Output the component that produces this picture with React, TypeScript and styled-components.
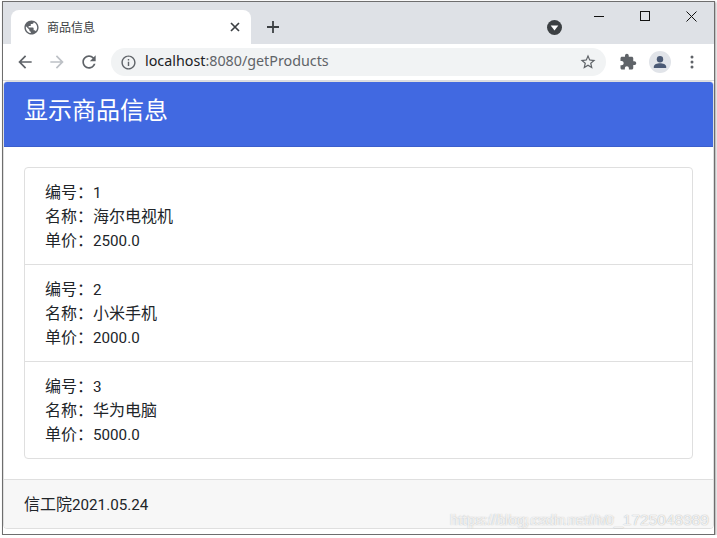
import styled, { createGlobalStyle } from "styled-components"

const GlobalStyle = createGlobalStyle`
html, body {
  margin: 0;
  padding: 0;
  background: #fff;
}
body {
  font-family: "Noto Sans CJK SC", sans-serif;
  color: #212529;
}
`
const BrowserWindow = styled.div`
box-sizing: border-box;
width: 713px;
height: 534px;
margin: 1px 0 0 2px;
border: 1px solid #6e6e6e;
box-shadow: 1px 1px 2px rgba(0, 0, 0, .35);
background: #fff;
display: flex;
flex-direction: column;
overflow: hidden;
position: relative;
`
const TabStrip = styled.div`
height: 42px;
background: #dee1e6;
display: flex;
padding-left: 8px;
flex-shrink: 0;
`
const Tab = styled.div`
width: 240px;
height: 34px;
margin-top: 8px;
background: #fff;
border-radius: 8px 8px 0 0;
display: flex;
align-items: center;
box-sizing: border-box;
padding: 0 11px 0 12px;
`
const TabTitle = styled.span`
font-size: 12px;
line-height: 16px;
margin: 0 0 1px 7px;
color: #3c4043;
flex: 1;
`
const NewTab = styled.div`
width: 28px;
height: 34px;
margin: 8px 0 0 8px;
display: flex;
align-items: center;
justify-content: center;
`
const MediaButton = styled.div`
width: 24px;
height: 34px;
margin: 8px 9px 0 auto;
padding-right: 1px;
box-sizing: border-box;
display: flex;
align-items: center;
justify-content: center;
`
const WindowButton = styled.div`
width: 46px;
height: 28px;
display: flex;
align-items: center;
justify-content: center;
`
const Toolbar = styled.div`
height: 36px;
background: #fff;
border-bottom: 1px solid #dadce0;
display: flex;
align-items: center;
padding-left: 6px;
flex-shrink: 0;
`
const NavButton = styled.div`
width: 32px;
height: 28px;
display: flex;
align-items: center;
justify-content: center;
`
const Omnibox = styled.div`
width: 495px;
height: 28px;
margin: 0 6px 0 6px;
border-radius: 14px;
background: #f1f3f4;
display: flex;
align-items: center;
box-sizing: border-box;
padding: 0 9px 0 9px;
`
const UrlText = styled.div`
font-family: "Noto Sans", sans-serif;
font-size: 14.3px;
line-height: 18px;
margin: 0 0 2px 8px;
flex: 1;
color: #5f6368;
white-space: nowrap;
`
const UrlHost = styled.span`
color: #202124;
`
const ToolButton = styled.div`
width: 32px;
height: 28px;
display: flex;
align-items: center;
justify-content: center;
`
const Card = styled.div`
flex: 1;
box-sizing: border-box;
margin-bottom: 5px;
border: 1px solid #dfdfdf;
border-radius: 4px;
display: flex;
flex-direction: column;
overflow: hidden;
`
const CardHeader = styled.div`
height: 65px;
flex-shrink: 0;
box-sizing: border-box;
background: #4169e1;
border-bottom: 1px solid #3b5fcc;
color: #fff;
font-size: 24px;
line-height: 54px;
padding-left: 20px;
`
const CardBody = styled.div`
flex: 1;
padding: 20px;
`
const ListGroup = styled.div`
border: 1px solid #dfdfdf;
border-radius: 4px;
`
const ListItem = styled.div`
padding: 12px 20px;
font-size: 16px;
color: #212529;
& + & {
  border-top: 1px solid #dfdfdf;
}
`
const Line = styled.div`
height: 24px;
line-height: 22px;
`
const Num = styled.span`
font-family: "Roboto", sans-serif;
font-size: 15.2px;
`
const CardFooter = styled.div`
height: 49px;
flex-shrink: 0;
box-sizing: border-box;
background: #f7f7f7;
border-top: 1px solid #dfdfdf;
font-size: 16px;
line-height: 46px;
padding-left: 20px;
color: #212529;
`
const Watermark = styled.div`
position: absolute;
right: 5px;
bottom: 5px;
width: 258px;
height: 18px;
font-family: "Liberation Sans", sans-serif;
font-size: 15.5px;
line-height: 18px;
color: rgba(255, 255, 255, .75);
text-shadow: 0 0 1px rgba(120, 120, 120, .42);
white-space: nowrap;
`
const WatermarkLine = styled.span`
position: absolute;
right: 0;
top: 0;
`

const products = [
  { id: "1", name: "海尔电视机", price: "2500.0" },
  { id: "2", name: "小米手机", price: "2000.0" },
  { id: "3", name: "华为电脑", price: "5000.0" },
]

const Icon = ({ d, size, color }: { d: string; size: number; color: string }) => (
  <svg width={size} height={size} viewBox="0 0 24 24" fill={color}>
    <path d={d} />
  </svg>
)

const App = () => {
  return (
    <>
      <GlobalStyle />
      <BrowserWindow>
        <TabStrip>
          <Tab>
            <Icon size={17} color="#5f6368" d="M12 2C6.48 2 2 6.48 2 12s4.48 10 10 10 10-4.48 10-10S17.52 2 12 2zm-1 17.93c-3.95-.49-7-3.85-7-7.93 0-.62.08-1.21.21-1.79L9 15v1c0 1.1.9 2 2 2v1.93zm6.9-2.54c-.26-.81-1-1.39-1.9-1.39h-1v-3c0-.55-.45-1-1-1H8v-2h2c.55 0 1-.45 1-1V7h2c1.1 0 2-.9 2-2v-.41c2.93 1.19 5 4.06 5 7.41 0 2.08-.8 3.97-2.1 5.39z" />
            <TabTitle>商品信息</TabTitle>
            <svg width="10" height="10" viewBox="0 0 10 10" stroke="#3c4043" strokeWidth="1.7">
              <path d="M1 1l8 8M9 1l-8 8" />
            </svg>
          </Tab>
          <NewTab>
            <svg width="12" height="12" viewBox="0 0 12 12" stroke="#3c4043" strokeWidth="1.8">
              <path d="M6 0v12M0 6h12" />
            </svg>
          </NewTab>
          <MediaButton>
            <svg width="15" height="15" viewBox="0 0 15 15">
              <circle cx="7.5" cy="7.5" r="7.5" fill="#3c4043" />
              <path d="M3.7 5.6h7.6L7.5 10.4z" fill="#fff" />
            </svg>
          </MediaButton>
          <WindowButton>
            <svg width="10" height="10" viewBox="0 0 10 10" stroke="#111" strokeWidth="1">
              <path d="M0 5.5h10" />
            </svg>
          </WindowButton>
          <WindowButton>
            <svg width="10" height="10" viewBox="0 0 10 10" stroke="#111" strokeWidth="1" fill="none">
              <rect x=".5" y=".5" width="9" height="9" />
            </svg>
          </WindowButton>
          <WindowButton>
            <svg width="11" height="11" viewBox="0 0 11 11" stroke="#111" strokeWidth="1">
              <path d="M.5.5l10 10M10.5.5l-10 10" />
            </svg>
          </WindowButton>
        </TabStrip>
        <Toolbar>
          <NavButton>
            <Icon size={20} color="#5f6368" d="M20 11H7.83l5.59-5.59L12 4l-8 8 8 8 1.41-1.41L7.83 13H20v-2z" />
          </NavButton>
          <NavButton>
            <Icon size={20} color="#bdc1c6" d="M12 4l-1.41 1.41L16.17 11H4v2h12.17l-5.58 5.59L12 20l8-8z" />
          </NavButton>
          <NavButton>
            <Icon size={20} color="#5f6368" d="M17.65 6.35C16.2 4.9 14.21 4 12 4c-4.42 0-7.99 3.58-7.99 8s3.57 8 7.99 8c3.73 0 6.84-2.55 7.73-6h-2.08c-.82 2.33-3.04 4-5.65 4-3.31 0-6-2.69-6-6s2.69-6 6-6c1.66 0 3.14.69 4.22 1.78L13 11h7V4l-2.35 2.35z" />
          </NavButton>
          <Omnibox>
            <Icon size={17} color="#5f6368" d="M11 7h2v2h-2zm0 4h2v6h-2zm1-9C6.48 2 2 6.48 2 12s4.48 10 10 10 10-4.48 10-10S17.52 2 12 2zm0 18c-4.41 0-8-3.59-8-8s3.59-8 8-8 8 3.59 8 8-3.59 8-8 8z" />
            <UrlText><UrlHost>localhost</UrlHost>:8080/getProducts</UrlText>
            <Icon size={18} color="#5f6368" d="M22 9.24l-7.19-.62L12 2 9.19 8.63 2 9.24l5.46 4.73L5.82 21 12 17.27 18.18 21l-1.63-7.03L22 9.24zM12 15.4l-3.76 2.27 1-4.28-3.32-2.88 4.38-.38L12 6.1l1.71 4.04 4.38.38-3.32 2.88 1 4.28L12 15.4z" />
          </Omnibox>
          <ToolButton>
            <Icon size={18} color="#5f6368" d="M20.5 11H19V7c0-1.1-.9-2-2-2h-4V3.5C13 2.12 11.88 1 10.5 1S8 2.12 8 3.5V5H4c-1.1 0-1.99.9-1.99 2v3.8H3.5c1.49 0 2.7 1.21 2.7 2.7s-1.21 2.7-2.7 2.7H2V20c0 1.1.9 2 2 2h3.8v-1.5c0-1.49 1.21-2.7 2.7-2.7 1.49 0 2.7 1.21 2.7 2.7V22H17c1.1 0 2-.9 2-2v-4h1.5c1.38 0 2.5-1.12 2.5-2.5S21.88 11 20.5 11z" />
          </ToolButton>
          <ToolButton>
            <svg width="22" height="22" viewBox="0 0 22 22">
              <circle cx="11" cy="11" r="11" fill="#e1e4e9" />
              <circle cx="11" cy="8.2" r="3.2" fill="#4b5a75" />
              <path d="M4.8 17v-1.2c0-2.6 3.6-3.6 6.2-3.6s6.2 1 6.2 3.6V17z" fill="#4b5a75" />
            </svg>
          </ToolButton>
          <ToolButton>
            <svg width="4" height="14" viewBox="0 0 4 14" fill="#5f6368">
              <circle cx="2" cy="2" r="1.5" />
              <circle cx="2" cy="7" r="1.5" />
              <circle cx="2" cy="12" r="1.5" />
            </svg>
          </ToolButton>
        </Toolbar>
        <Card>
          <CardHeader>显示商品信息</CardHeader>
          <CardBody>
            <ListGroup>
              {products.map((p) => (
                <ListItem key={p.id}>
                  <Line>编号：<Num>{p.id}</Num></Line>
                  <Line>名称：{p.name}</Line>
                  <Line>单价：<Num>{p.price}</Num></Line>
                </ListItem>
              ))}
            </ListGroup>
          </CardBody>
          <CardFooter>信工院<Num>2021.05.24</Num></CardFooter>
        </Card>
        <Watermark>
          <WatermarkLine>https://blog.csdn.net/Mr_1725048989</WatermarkLine>
          <WatermarkLine>https://blog.csdn.net/m0_1725048389</WatermarkLine>
        </Watermark>
      </BrowserWindow>
    </>
  )
}

export default App
